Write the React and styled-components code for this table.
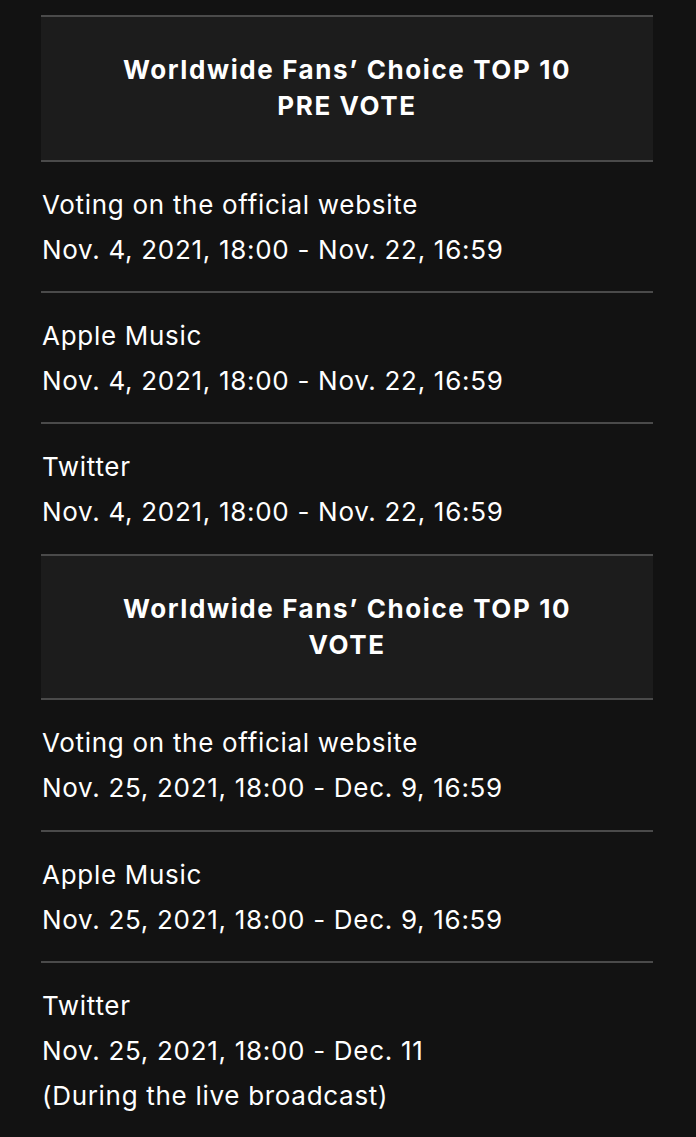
import React from 'react';
import styled, { createGlobalStyle } from 'styled-components';

const GlobalStyle = createGlobalStyle`
html, body {
    margin: 0;
    padding: 0;
    background: #121212;
}
body {
    font-family: "Inter", "Open Sans", sans-serif;
    color: #ffffff;
}
`;

const Page = styled.div`
padding: 15px 43px 0 41px;
min-height: 1137px;
box-sizing: border-box;
`;

const Table = styled.div`
display: flex;
flex-direction: column;
border-top: 2px solid #4a4a4a;
`;

const Header = styled.div`
background: #1c1c1c;
padding: 35px 8px 35.5px;
text-align: center;
font-size: 26px;
font-weight: 700;
line-height: 36px;
letter-spacing: 1.6px;
border-bottom: 2px solid #4a4a4a;
`;

const Row = styled.div`
padding: 20px 0 19.4px 1px;
font-size: 26px;
line-height: 45px;
font-weight: 400;
letter-spacing: 0.7px;
border-bottom: ${p => (p.$last ? 'none' : '2px solid #4a4a4a')};
`;

const Line = styled.div`
white-space: nowrap;
`;

const sections = [
    {
        title: 'PRE VOTE',
        rows: [
            ['Voting on the official website', 'Nov. 4, 2021, 18:00 - Nov. 22, 16:59'],
            ['Apple Music', 'Nov. 4, 2021, 18:00 - Nov. 22, 16:59'],
            ['Twitter', 'Nov. 4, 2021, 18:00 - Nov. 22, 16:59'],
        ],
    },
    {
        title: 'VOTE',
        rows: [
            ['Voting on the official website', 'Nov. 25, 2021, 18:00 - Dec. 9, 16:59'],
            ['Apple Music', 'Nov. 25, 2021, 18:00 - Dec. 9, 16:59'],
            ['Twitter', 'Nov. 25, 2021, 18:00 - Dec. 11', '(During the live broadcast)'],
        ],
    },
];

export default function App() {
    return (
        <Page>
            <GlobalStyle />
            <Table>
                {sections.map((section, si) => (
                    <React.Fragment key={section.title}>
                        <Header>
                            <Line>Worldwide Fans’ Choice TOP 10</Line>
                            <Line>{section.title}</Line>
                        </Header>
                        {section.rows.map((row, ri) => (
                            <Row key={ri} $last={si === sections.length - 1 && ri === section.rows.length - 1}>
                                {row.map(text => <Line key={text}>{text}</Line>)}
                            </Row>
                        ))}
                    </React.Fragment>
                ))}
            </Table>
        </Page>
    );
}
